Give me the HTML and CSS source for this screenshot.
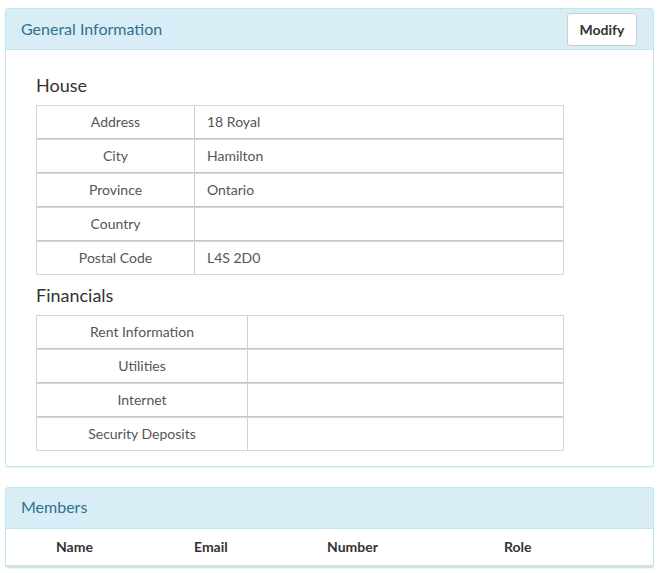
FILE: index.html
```
<!DOCTYPE html>
<html>
<head>
<meta charset="utf-8">
<link rel="stylesheet" href="styles.css">
</head>
<body>
<div class="page">
  <section class="panel">
    <header class="panel-heading">
      <h3 class="panel-title">General Information</h3>
      <button class="btn">Modify</button>
    </header>
    <div class="panel-body">
      <h4 class="section-title">House</h4>
      <div class="kv house">
        <div class="kv-row"><div class="kv-label">Address</div><div class="kv-value">18 Royal</div></div>
        <div class="kv-row"><div class="kv-label">City</div><div class="kv-value">Hamilton</div></div>
        <div class="kv-row"><div class="kv-label">Province</div><div class="kv-value">Ontario</div></div>
        <div class="kv-row"><div class="kv-label">Country</div><div class="kv-value"></div></div>
        <div class="kv-row"><div class="kv-label">Postal Code</div><div class="kv-value">L4S 2D0</div></div>
      </div>
      <h4 class="section-title">Financials</h4>
      <div class="kv financials">
        <div class="kv-row"><div class="kv-label">Rent Information</div><div class="kv-value"></div></div>
        <div class="kv-row"><div class="kv-label">Utilities</div><div class="kv-value"></div></div>
        <div class="kv-row"><div class="kv-label">Internet</div><div class="kv-value"></div></div>
        <div class="kv-row"><div class="kv-label">Security Deposits</div><div class="kv-value"></div></div>
      </div>
    </div>
  </section>
  <section class="panel members">
    <header class="panel-heading">
      <h3 class="panel-title">Members</h3>
    </header>
    <div class="members-head">
      <div class="col col-name">Name</div>
      <div class="col col-email">Email</div>
      <div class="col col-number">Number</div>
      <div class="col col-role">Role</div>
    </div>
  </section>
</div>
</body>
</html>
```
FILE: styles.css
```
* { box-sizing: border-box; }
html, body { margin: 0; padding: 0; background: #fff; }
body {
  font-family: Lato, "Open Sans", "Liberation Sans", sans-serif;
  font-size: 14px;
  line-height: 20px;
  color: #333;
}
.page { padding: 8px 7px 0 5px; }
.panel {
  border: 1px solid #bce8f1;
  border-radius: 3px;
  background: #fff;
  margin-bottom: 20px;
  box-shadow: 0 1px 1px rgba(0,0,0,0.05);
}
.panel-heading {
  display: flex;
  align-items: center;
  justify-content: space-between;
  height: 41px;
  padding: 0 15px;
  background: #d9edf7;
  border-bottom: 1px solid #bce8f1;
  border-radius: 2px 2px 0 0;
}
.panel-title {
  margin: 0;
  font-size: 16px;
  font-weight: 400;
  color: #31708f;
}
.members .panel-title { margin-top: -2px; }
.btn {
  font-family: inherit;
  font-size: 14px;
  font-weight: 700;
  color: #333;
  background: #fff;
  border: 1px solid #ccc;
  border-radius: 3px;
  height: 33px;
  width: 70px;
  padding: 0;
  margin-right: 1px;
}
.panel-body { padding: 15px 15px 15px 30px; }
.section-title {
  margin: 10px 0 10px;
  font-size: 18px;
  line-height: 20px;
  font-weight: 400;
  color: #333;
}
.kv { width: 528px; color: #555; }
.kv-row {
  display: flex;
  height: 34px;
  border-left: 1px solid #d6d6d6;
  border-right: 1px solid #d6d6d6;
  border-top: 1px solid #d6d6d6;
  border-bottom: 1px solid #c8c8c8;
}
.kv-row:last-child { border-bottom-color: #d6d6d6; }
.kv-label {
  display: flex;
  align-items: center;
  justify-content: center;
  border-right: 1px solid #d0d0d0;
}
.house .kv-label { width: 158px; }
.financials .kv-label { width: 211px; }
.kv-value {
  flex: 1;
  display: flex;
  align-items: center;
  padding-left: 12px;
}
.members-head {
  display: flex;
  height: 38px;
  padding: 8px 0 8px 50px;
  border-bottom: 2px solid #ddd;
  font-weight: 700;
  color: #333;
}
.col-name { width: 138px; }
.col-email { width: 133px; }
.col-number { width: 177px; }
.col-role { flex: 1; }
```
